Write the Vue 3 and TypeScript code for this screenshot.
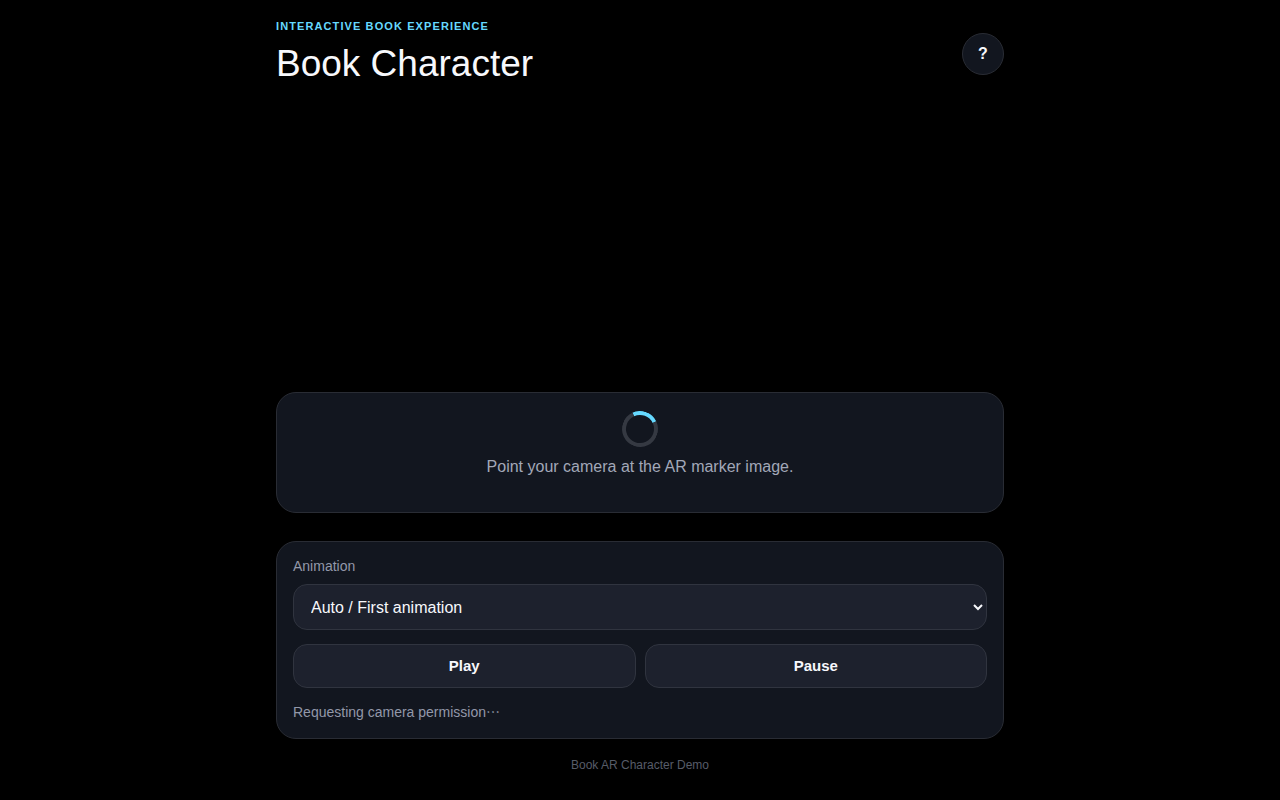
<script setup lang="ts">
import { ref } from 'vue'

const animations: string[] = ['Auto / First animation']
const selected = ref<string>(animations[0])
const status = ref<string>('Requesting camera permission')
</script>

<template>
  <div class="app">
    <header class="header">
      <div>
        <p class="eyebrow">INTERACTIVE BOOK EXPERIENCE</p>
        <h1 class="title">Book Character</h1>
      </div>
      <button class="help" type="button" aria-label="Help">?</button>
    </header>

    <main class="main">
      <section class="panel scan">
        <div class="spinner"></div>
        <p class="hint">Point your camera at the AR marker image.</p>
      </section>

      <section class="panel controls">
        <label class="label" for="animation">Animation</label>
        <select id="animation" v-model="selected" class="select">
          <option v-for="name in animations" :key="name" :value="name">{{ name }}</option>
        </select>
        <div class="actions">
          <button class="action" type="button">Play</button>
          <button class="action" type="button">Pause</button>
        </div>
        <p class="status">{{ status }}<span class="dots" lang="zh-Hant">…</span></p>
      </section>
    </main>

    <footer class="footer">Book AR Character Demo</footer>
  </div>
</template>

<style>
body {
  background: #000;
}
</style>

<style scoped>
.app {
  box-sizing: border-box;
  display: flex;
  flex-direction: column;
  max-width: 760px;
  min-height: 100vh;
  margin: 0 auto;
  padding: 18px 16px 27px;
  color: #f7f8fc;
  font-family: "Liberation Sans", Arial, sans-serif;
  font-size: 16px;
}

p,
h1 {
  margin: 0;
}

.header {
  display: flex;
  align-items: center;
  justify-content: space-between;
  gap: 16px;
}

.eyebrow {
  color: #66d9ff;
  font-size: 11px;
  font-weight: 700;
  line-height: 16px;
  letter-spacing: 0.1em;
}

.title {
  margin: 8px 0 4px;
  font-size: 37px;
  font-weight: 400;
  line-height: 44px;
}

.help {
  flex: none;
  width: 42px;
  height: 42px;
  padding: 0;
  border: 1px solid #292c34;
  border-radius: 50%;
  background: #12161f;
  color: inherit;
  font: inherit;
  font-weight: 700;
}

.main {
  display: flex;
  flex-direction: column;
  gap: 28px;
  margin-top: auto;
}

.panel {
  border: 1px solid #292c34;
  border-radius: 20px;
  background: #12161f;
}

.scan {
  display: flex;
  flex-direction: column;
  align-items: center;
  gap: 10px;
  padding: 18px 18px 35px;
}

.spinner {
  box-sizing: border-box;
  width: 36px;
  height: 36px;
  border: 4px solid #353942;
  border-top-color: #66d9ff;
  border-radius: 50%;
  transform: rotate(20deg);
}

.hint {
  color: #a2a8b8;
  line-height: 20px;
}

.controls {
  display: flex;
  flex-direction: column;
  padding: 16px;
}

.label {
  color: #9298a9;
  font-size: 14px;
  line-height: 16px;
}

.select {
  width: 100%;
  height: 46px;
  margin-top: 10px;
  padding: 0 0 0 13px;
  border: 1px solid #30343f;
  border-radius: 14px;
  background: #1d212d;
  color: inherit;
  font: inherit;
}

.actions {
  display: grid;
  grid-template-columns: 1fr 1fr;
  gap: 9px;
  margin-top: 14px;
}

.action {
  height: 44px;
  padding: 0 14px 2px;
  border: 1px solid #30343f;
  border-radius: 14px;
  background: #1d212d;
  color: inherit;
  font: inherit;
  font-size: 15px;
  font-weight: 700;
}

.status {
  margin-top: 16px;
  padding-bottom: 2px;
  color: #9298a9;
  font-size: 14px;
  line-height: 16px;
}

.dots {
  font-family: "Noto Sans CJK TC", sans-serif;
  line-height: 1;
}

.footer {
  margin-top: 18px;
  color: #575c69;
  font-size: 12px;
  line-height: 16px;
  text-align: center;
}
</style>
